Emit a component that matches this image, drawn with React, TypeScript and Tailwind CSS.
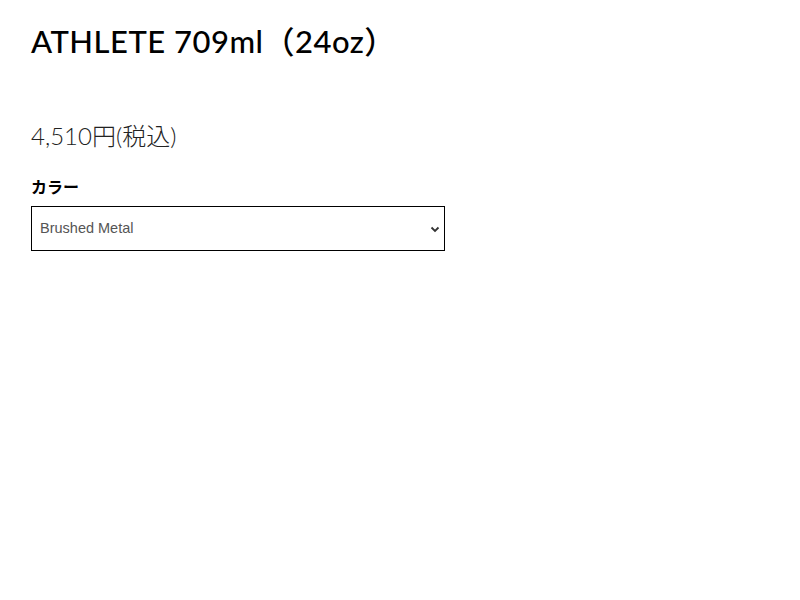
export default function App() {
  return (
    <div className="min-h-[600px] w-[800px] bg-white pl-[31px] pt-[23px]">
      <h1
        className="text-[31px] leading-[36px] font-medium tracking-[0.5px] text-black"
        style={{ fontFamily: 'Lato, "Noto Sans CJK JP", sans-serif' }}
      >
        ATHLETE 709ml（24oz）
      </h1>

      <p
        className="mt-[61px] text-[24px] leading-[32px] font-light text-[#222]"
        style={{ fontFamily: 'Lato, "Noto Sans CJK JP", sans-serif' }}
      >
        4,510円(税込)
      </p>

      <div className="mt-[24px]">
        <label
          className="block text-[16px] leading-[20px] font-bold text-black"
          style={{ fontFamily: '"Noto Sans CJK JP", sans-serif' }}
        >
          カラー
        </label>
        <div className="relative mt-[10px] w-[414px]">
          <select
            className="h-[45px] w-full appearance-none border border-black bg-white pl-[8px] pr-[30px] text-[14.5px] text-[#555] outline-none"
            style={{ fontFamily: '"Liberation Sans", Arial, sans-serif' }}
            defaultValue="Brushed Metal"
          >
            <option>Brushed Metal</option>
            <option>Stainless</option>
            <option>Black</option>
          </select>
          <svg
            className="pointer-events-none absolute right-[5px] top-[19px]"
            width="10"
            height="8"
            viewBox="0 0 10 8"
          >
            <path d="M1.5 2.5 L5 6 L8.5 2.5" fill="none" stroke="#333" strokeWidth="1.8" />
          </svg>
        </div>
      </div>
    </div>
  );
}
